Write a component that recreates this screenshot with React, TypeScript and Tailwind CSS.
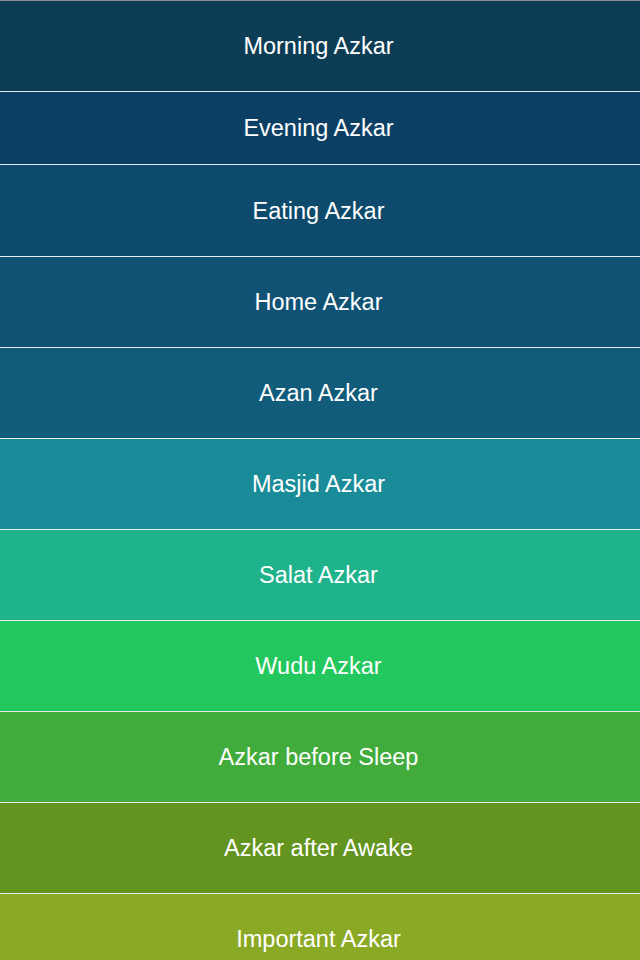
import React from 'react';

interface AzkarItem {
  title: string;
  color: string;
  height: string;
}

const items: AzkarItem[] = [
  { title: 'Morning Azkar', color: 'bg-[#0c3d55]', height: 'h-[91px]' },
  { title: 'Evening Azkar', color: 'bg-[#0c3f64]', height: 'h-[73px]' },
  { title: 'Eating Azkar', color: 'bg-[#0d4a6c]', height: 'h-[92px]' },
  { title: 'Home Azkar', color: 'bg-[#0f5273]', height: 'h-[91px]' },
  { title: 'Azan Azkar', color: 'bg-[#115b7b]', height: 'h-[91px]' },
  { title: 'Masjid Azkar', color: 'bg-[#1a8c99]', height: 'h-[91px]' },
  { title: 'Salat Azkar', color: 'bg-[#1fb38b]', height: 'h-[91px]' },
  { title: 'Wudu Azkar', color: 'bg-[#22c75d]', height: 'h-[91px]' },
  { title: 'Azkar before Sleep', color: 'bg-[#41ac3c]', height: 'h-[91px]' },
  { title: 'Azkar after Awake', color: 'bg-[#63941f]', height: 'h-[91px]' },
  { title: 'Important Azkar', color: 'bg-[#8aa924]', height: 'h-[91px]' },
];

export default function App() {
  return (
    <div className="w-[640px] h-[960px] overflow-hidden bg-white border-t border-[#8c8c8c] font-['Liberation_Sans',Arial,sans-serif]">
      {items.map((item) => (
        <button
          key={item.title}
          className={`w-full ${item.height} ${item.color} border-b border-[#e6edf1] flex items-center justify-center pr-[3px] pt-[2px] text-white text-[23.5px] leading-none`}
        >
          {item.title}
        </button>
      ))}
    </div>
  );
}
